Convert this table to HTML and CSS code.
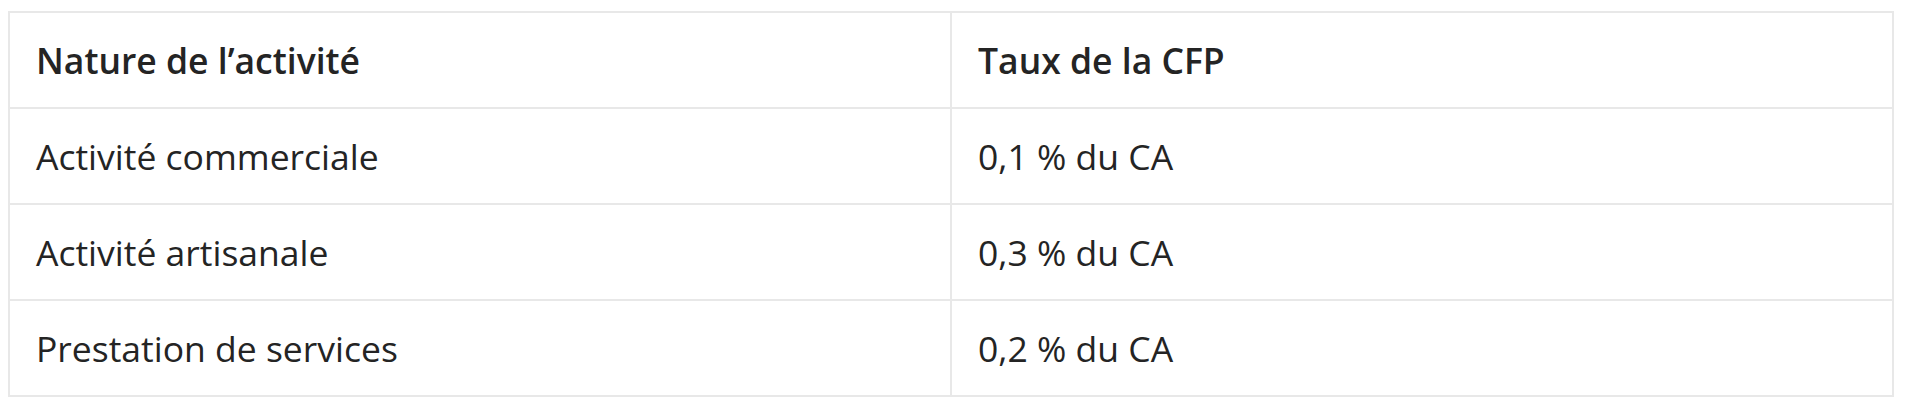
FILE: index.html
```html
<!DOCTYPE html>
<html lang="fr">
<head>
<meta charset="utf-8">
<title>CFP</title>
<link rel="stylesheet" href="styles.css">
</head>
<body>
<table class="rates">
  <thead>
    <tr><th>Nature de l’activité</th><th>Taux de la CFP</th></tr>
  </thead>
  <tbody>
    <tr><td>Activité commerciale</td><td>0,1 % du CA</td></tr>
    <tr><td>Activité artisanale</td><td>0,3 % du CA</td></tr>
    <tr><td>Prestation de services</td><td>0,2 % du CA</td></tr>
  </tbody>
</table>
</body>
</html>
```

FILE: styles.css
```css
html, body {
  margin: 0;
  background: #ffffff;
}
body {
  padding: 11px 26px 0 8px;
  font-family: "Open Sans", "Noto Sans", sans-serif;
  color: #242424;
}
.rates {
  width: 100%;
  border-collapse: collapse;
  table-layout: fixed;
}
.rates th,
.rates td {
  border: 2px solid #e8e8e8;
  height: 96px;
  padding: 0 26px;
  text-align: left;
  vertical-align: middle;
  font-size: 35.5px;
  box-sizing: border-box;
}
.rates th {
  font-weight: 600;
}
.rates td {
  font-weight: 400;
}
```
